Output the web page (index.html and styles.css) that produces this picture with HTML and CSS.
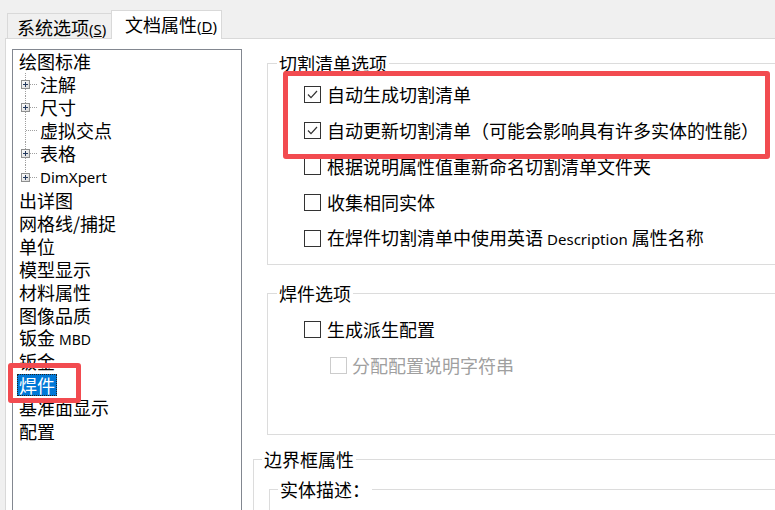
FILE: index.html
```html
<!DOCTYPE html>
<html lang="zh-CN">
<head>
<meta charset="utf-8">
<title>文档属性 - 焊件</title>
<link rel="stylesheet" href="styles.css">
</head>
<body>
<div class="tabs">
  <div class="tab tab-off">系统选项<span class="key">(<u>S</u>)</span></div>
  <div class="tab tab-on">文档属性<span class="key">(<u>D</u>)</span></div>
</div>
<div class="panel">
  <div class="tree">
    <div class="node"><span>绘图标准</span></div>
    <div class="node child"><span class="twig"><svg class="plus" width="9" height="9" viewBox="0 0 9 9"><defs><linearGradient id="g" x1="0" y1="0" x2="1" y2="1"><stop offset="0" stop-color="#ffffff"/><stop offset="1" stop-color="#d6d6d6"/></linearGradient></defs><rect x="0.5" y="0.5" width="8" height="8" fill="url(#g)" stroke="#8e8f8f"/><path d="M2 4.5h5M4.5 2v5" stroke="#243a5e" stroke-width="1"/></svg></span><span>注解</span></div>
    <div class="node child"><span class="twig"><svg class="plus" width="9" height="9" viewBox="0 0 9 9"><rect x="0.5" y="0.5" width="8" height="8" fill="url(#g)" stroke="#8e8f8f"/><path d="M2 4.5h5M4.5 2v5" stroke="#243a5e" stroke-width="1"/></svg></span><span>尺寸</span></div>
    <div class="node child"><span class="twig"></span><span>虚拟交点</span></div>
    <div class="node child"><span class="twig"><svg class="plus" width="9" height="9" viewBox="0 0 9 9"><rect x="0.5" y="0.5" width="8" height="8" fill="url(#g)" stroke="#8e8f8f"/><path d="M2 4.5h5M4.5 2v5" stroke="#243a5e" stroke-width="1"/></svg></span><span>表格</span></div>
    <div class="node child last"><span class="twig"><svg class="plus" width="9" height="9" viewBox="0 0 9 9"><rect x="0.5" y="0.5" width="8" height="8" fill="url(#g)" stroke="#8e8f8f"/><path d="M2 4.5h5M4.5 2v5" stroke="#243a5e" stroke-width="1"/></svg></span><span class="lat">DimXpert</span></div>
    <div class="node"><span>出详图</span></div>
    <div class="node"><span>网格线/捕捉</span></div>
    <div class="node"><span>单位</span></div>
    <div class="node"><span>模型显示</span></div>
    <div class="node"><span>材料属性</span></div>
    <div class="node"><span>图像品质</span></div>
    <div class="node"><span>钣金 <span class="lat small">MBD</span></span></div>
    <div class="node"><span>钣金</span></div>
    <div class="node"><span class="sel">焊件</span></div>
    <div class="node"><span>基准面显示</span></div>
    <div class="node"><span>配置</span></div>
  </div>

  <div class="content">
    <fieldset class="group g1">
      <legend>切割清单选项</legend>
      <div class="opt"><span class="cb on"><svg width="15" height="15" viewBox="0 0 15 15"><path d="M3 7.5l3 3.2 6-6.7" fill="none" stroke="#333" stroke-width="1.2"/></svg></span><span>自动生成切割清单</span></div>
      <div class="opt"><span class="cb on"><svg width="15" height="15" viewBox="0 0 15 15"><path d="M3 7.5l3 3.2 6-6.7" fill="none" stroke="#333" stroke-width="1.2"/></svg></span><span>自动更新切割清单（可能会影响具有许多实体的性能）</span></div>
      <div class="opt"><span class="cb"></span><span>根据说明属性值重新命名切割清单文件夹</span></div>
      <div class="opt"><span class="cb"></span><span>收集相同实体</span></div>
      <div class="opt"><span class="cb"></span><span>在焊件切割清单中使用英语 <span class="lat">Description</span> 属性名称</span></div>
    </fieldset>

    <fieldset class="group g2">
      <legend>焊件选项</legend>
      <div class="opt"><span class="cb"></span><span>生成派生配置</span></div>
      <div class="opt sub disabled"><span class="cb"></span><span>分配配置说明字符串</span></div>
    </fieldset>

    <fieldset class="group g3">
      <legend>边界框属性</legend>
      <fieldset class="group g4">
        <legend>实体描述：</legend>
      </fieldset>
    </fieldset>
  </div>
</div>

<div class="mark mark-list"></div>
<div class="mark mark-node"></div>
</body>
</html>
```

FILE: styles.css
```css
* { box-sizing: border-box; }

html, body {
  margin: 0;
  padding: 0;
}

body {
  width: 775px;
  height: 510px;
  overflow: hidden;
  background: #f0f0f0;
  font-family: "Noto Sans CJK SC", "Noto Sans", sans-serif;
  font-size: 18px;
  color: #000;
  position: relative;
}

.lat {
  font-family: "Noto Sans", "Open Sans", sans-serif;
  font-size: 15px;
}
.lat.small { font-size: 14px; }

/* tabs */
.tabs {
  height: 38px;
  display: flex;
  align-items: flex-end;
  padding-left: 7px;
}

.tab {
  border: 1px solid #d9d9d9;
  border-bottom: none;
  white-space: nowrap;
  line-height: 20px;
}

.tab-off {
  width: 104px;
  height: 25px;
  padding: 3px 0 0 9px;
  background: #f0f0f0;
  border-right: none;
}

.tab-on {
  width: 111px;
  height: 29px;
  margin-bottom: -1px;
  padding: 3px 0 0 13px;
  background: #fff;
  position: relative;
  z-index: 1;
}

.key {
  font-family: "Noto Sans", "Open Sans", sans-serif;
  font-size: 15px;
}

/* panel */
.panel {
  margin-left: 5px;
  height: 472px;
  background: #fff;
  border-top: 1px solid #d9d9d9;
  border-left: 1px solid #d9d9d9;
  display: flex;
  align-items: flex-start;
}

.tree {
  flex: none;
  width: 230px;
  height: 480px;
  margin: 10px 0 0 6px;
  border: 1px solid #828790;
  background: #fff;
}

.node {
  height: 23.1px;
  padding-left: 6px;
  display: flex;
  align-items: center;
  line-height: 21px;
  white-space: nowrap;
}

.twig {
  flex: none;
  width: 21px;
  height: 100%;
  display: flex;
  align-items: center;
  padding-left: 2px;
  background:
    repeating-linear-gradient(to bottom, #a0a0a0 0 1px, transparent 1px 2px) 6px 0 / 1px 100% no-repeat,
    repeating-linear-gradient(to right, #a0a0a0 0 1px, transparent 1px 2px) 7px 50% / 12px 1px no-repeat;
}

.node.last .twig {
  background:
    repeating-linear-gradient(to bottom, #a0a0a0 0 1px, transparent 1px 2px) 6px 0 / 1px 50% no-repeat,
    repeating-linear-gradient(to right, #a0a0a0 0 1px, transparent 1px 2px) 7px 50% / 12px 1px no-repeat;
}

.plus { display: block; }

.sel {
  margin-left: -2px;
  padding: 0 2px;
  height: 22px;
  line-height: 22px;
  background: #0078d7;
  color: #fff;
  outline: 1px dotted #222;
  outline-offset: -1px;
}

/* right column */
.content {
  flex: none;
  width: 600px;
  margin-left: 11px;
  padding-top: 14px;
}

.group {
  margin: 0;
  border: 1px solid #dcdcdc;
  min-width: 0;
}

.group legend {
  padding: 0 2px;
  line-height: 20px;
  height: 20px;
}

.g1 {
  margin-left: 14px;
  padding: 3px 0 8px 9px;
}

.g2 {
  margin: 18px 0 0 14px;
  padding: 8px 0 51px 9px;
}

.g3 {
  margin-top: 14px;
  padding: 10px 0 0 8px;
  height: 80px;
}

.g4 {
  margin-left: 7px;
  padding: 0 0 0 8px;
  height: 60px;
}

.opt {
  height: 36px;
  margin-left: 27px;
  display: flex;
  align-items: center;
  white-space: nowrap;
  line-height: 22px;
}

.opt.sub { margin-left: 53px; }

.cb {
  flex: none;
  width: 17px;
  height: 17px;
  margin-right: 6px;
  border: 1px solid #333;
  background: #fff;
  display: flex;
  align-items: center;
  justify-content: center;
}

.cb svg { display: block; }

.disabled { color: #a0a0a0; }
.disabled .cb {
  border-color: #cccccc;
  margin-right: 5px;
}

/* red annotation boxes */
.mark {
  position: absolute;
  border: 5px solid #f24b50;
  border-radius: 3px;
}

.mark-list {
  left: 283px;
  top: 71px;
  width: 487px;
  height: 88px;
}

.mark-node {
  left: 8px;
  top: 363px;
  width: 73px;
  height: 40px;
}
```
